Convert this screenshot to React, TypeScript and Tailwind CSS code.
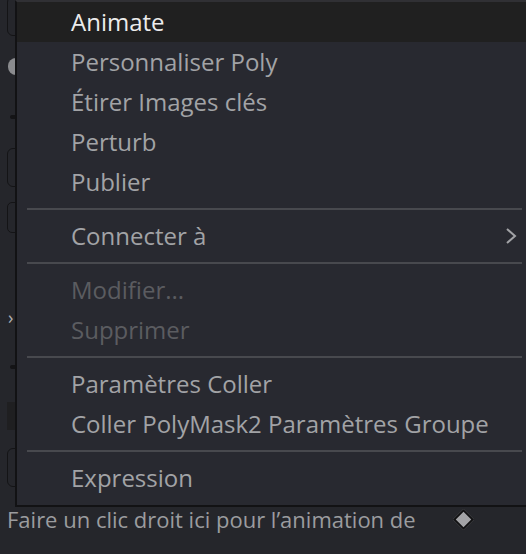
import React from 'react';

type Item =
  | { kind: 'item'; label: string; state?: 'active' | 'disabled'; submenu?: boolean }
  | { kind: 'sep' };

const items: Item[] = [
  { kind: 'item', label: 'Animate', state: 'active' },
  { kind: 'item', label: 'Personnaliser Poly' },
  { kind: 'item', label: 'Étirer Images clés' },
  { kind: 'item', label: 'Perturb' },
  { kind: 'item', label: 'Publier' },
  { kind: 'sep' },
  { kind: 'item', label: 'Connecter à', submenu: true },
  { kind: 'sep' },
  { kind: 'item', label: 'Modifier...', state: 'disabled' },
  { kind: 'item', label: 'Supprimer', state: 'disabled' },
  { kind: 'sep' },
  { kind: 'item', label: 'Paramètres Coller' },
  { kind: 'item', label: 'Coller PolyMask2 Paramètres Groupe' },
  { kind: 'sep' },
  { kind: 'item', label: 'Expression' },
];

export default function App() {
  return (
    <div className="flex flex-col w-[526px] h-[554px] overflow-hidden bg-[#25262b] font-['Open_Sans',sans-serif]">
      <div className="relative h-[507px] shrink-0">
        {/* inspector controls, mostly hidden behind the menu */}
        <div className="flex flex-col items-start pl-[7px]">
          <div className="mt-[-4px] w-[20px] h-[40px] rounded-[6px] border border-[#141416]" />
          <div className="mt-[22px] ml-[1px] w-[16px] h-[17px] rounded-full bg-[#8a8b8e]" />
          <div className="mt-[40px] ml-[3px] w-[8px] h-[4px] rounded-full bg-[#141416]" />
          <div className="mt-[29px] w-[20px] h-[39px] rounded-[6px] border border-[#141416]" />
          <div className="mt-[15px] w-[20px] h-[31px] rounded-[5px] border border-[#141416]" />
          <div className="mt-[75px] ml-[1px] text-[18px] leading-[18px] text-[#b0b0b2]">›</div>
          <div className="mt-[39px] ml-[3px] w-[8px] h-[4px] rounded-full bg-[#141416]" />
          <div className="mt-[33px] w-[20px] h-[28px] bg-[#1f1f21]" />
          <div className="mt-[18px] w-[20px] h-[39px] rounded-[6px] border border-[#141416]" />
        </div>

        {/* context menu */}
        <div className="absolute left-[15px] top-0 right-0 border-l-2 border-b-2 border-[#121214] border-t-2 border-t-[#303034] bg-[#282930] pb-[7px]">
          {items.map((it, i) =>
            it.kind === 'sep' ? (
              <div key={i} className="my-[6px] ml-[10px] mr-[4px] h-[2px] bg-[#48494e]" />
            ) : (
              <div
                key={i}
                className={`flex h-[40px] items-center pl-[54px] pr-[8px] text-[24px] ${
                  it.state === 'active'
                    ? 'bg-[#202020] text-[#ececec]'
                    : it.state === 'disabled'
                    ? 'text-[#5b5c60]'
                    : 'text-[#a2a3a6]'
                }`}
              >
                <span className="flex-1 whitespace-nowrap">{it.label}</span>
                {it.submenu && (
                  <svg width="14" height="18" viewBox="0 0 14 18">
                    <path d="M3 2 L11 9 L3 16" fill="none" stroke="#a2a3a6" strokeWidth="2" />
                  </svg>
                )}
              </div>
            )
          )}
        </div>
      </div>

      {/* hint line below the menu */}
      <div className="flex items-center h-[24px] pl-[7px] text-[22px] leading-[24px] text-[#9b9c9f]">
        <span className="whitespace-nowrap">Faire un clic droit ici pour l’animation de</span>
        <span className="ml-[40px] inline-block w-[15px] h-[15px] rotate-45 bg-[#a3a3a6] border-2 border-[#111113]" />
      </div>
    </div>
  );
}
